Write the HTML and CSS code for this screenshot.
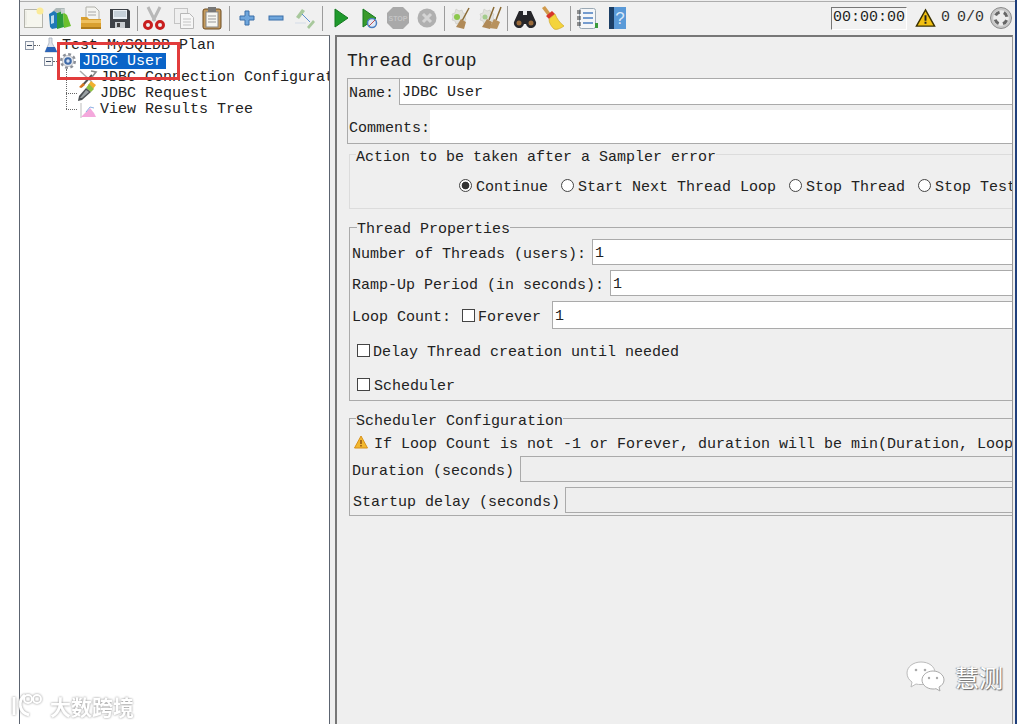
FILE: index.html
```html
<!DOCTYPE html>
<html lang="en">
<head>
<meta charset="utf-8">
<title>Thread Group</title>
<link rel="stylesheet" href="styles.css">
</head>
<body>
<div class="app">
  <div class="toolbar">
    <span class="tool g1"><svg viewBox="0 0 24 24"><rect x="3.500" y="3.500" width="18" height="18" fill="#f6f6ee" stroke="#b4b4ac"/><path d="M5 5v14" stroke="#e4e4dc"/><circle cx="19" cy="5" r="3.500" fill="#fbeb98"/></svg></span>
    <span class="tool g3"><svg viewBox="0 0 24 24"><path d="M4 6l4-4h9l-3 5z" fill="#aeb8b8"/><path d="M1 8l5-3 3 2v15l-5 1-2-2z" fill="#1f79b8"/><path d="M3 10l3-1v8l-3 1z" fill="#bcdcec"/><path d="M9 7l6-2 1 16-7 2z" fill="#2b9a3c"/><path d="M15 6l4 3 4 11-7 2z" fill="#6cc02c"/><path d="M13 3h4v4l-4 1z" fill="#c8d0d0"/></svg></span>
    <span class="tool g7"><svg viewBox="0 0 24 24"><path d="M7 1h9l4 4v10H7z" fill="#f4f4f0" stroke="#b0b0aa"/><path d="M9 6h8M9 9h8" stroke="#a8a8a8"/><path d="M2 11h6l2 2h12v8a2 2 0 0 1-2 2H4a2 2 0 0 1-2-2z" fill="#d9a030"/><path d="M2 14h20v3H2z" fill="#efc160"/><path d="M2 21h20v2H2z" fill="#b07c1c"/></svg></span>
    <span class="tool g5"><svg viewBox="0 0 24 24"><path d="M2 3h18l2 2v17H2z" fill="#3e4248"/><rect x="5" y="4" width="14" height="9" fill="#e8eef4"/><path d="M6 6h12M6 8h12M6 10h12" stroke="#a4b4c0"/><rect x="7" y="16" width="10" height="6" fill="#c8ccd0"/><rect x="9" y="17" width="3" height="4" fill="#444"/></svg></span>
    <span class="sep"></span>
    <span class="tool g4"><svg viewBox="0 0 24 24"><path d="M6 1l7 14M18 1l-7 14" stroke="#b8b8b8" stroke-width="3"/><circle cx="6" cy="19" r="3.500" fill="none" stroke="#c81e1e" stroke-width="3"/><circle cx="18" cy="19" r="3.500" fill="none" stroke="#c81e1e" stroke-width="3"/></svg></span>
    <span class="tool g6"><svg viewBox="0 0 24 24"><rect x="2.500" y="2.500" width="13" height="15" fill="#efefef" stroke="#c4c4c4"/><path d="M8.500 7.500h9l4 4v11h-13z" fill="#f6f6f6" stroke="#b8b8b8"/><path d="M11 13h8M11 16h8M11 19h8" stroke="#c4c4c4"/></svg></span>
    <span class="tool g4"><svg viewBox="0 0 24 24"><rect x="3" y="3" width="18" height="20" rx="2" fill="#c49a5c" stroke="#6b4a20"/><rect x="6" y="6" width="12" height="15" fill="#f6f6f0" stroke="#888"/><rect x="8" y="1" width="8" height="5" fill="#777"/><path d="M8 10h8M8 13h8M8 16h8" stroke="#999"/></svg></span>
    <span class="sep"></span>
    <span class="tool g5"><svg viewBox="0 0 24 24"><path d="M10 5h4v5h5v4h-5v5h-4v-5H5v-4h5z" fill="#6fa6dc" stroke="#3a6ea8"/></svg></span>
    <span class="tool g5"><svg viewBox="0 0 24 24"><rect x="5" y="10" width="14" height="4" fill="#6fa6dc" stroke="#3a6ea8"/></svg></span>
    <span class="tool g5"><svg viewBox="0 0 24 24"><path d="M3 11l6-8 3 2-6 8z" fill="#a8c89c"/><path d="M14 21l6-7 2 2-6 7z" fill="#a8c89c"/><path d="M9 8l8 8" stroke="#5a8fd0"/><path d="M2 17h11" stroke="#d4dce8"/></svg></span>
    <span class="sep"></span>
    <span class="tool g6"><svg viewBox="0 0 24 24"><path d="M6 3l13 9-13 9z" fill="#1f9a2c" stroke="#157a20"/></svg></span>
    <span class="tool g4"><svg viewBox="0 0 24 24"><path d="M6 3l13 9-13 9z" fill="#3a9a2c" stroke="#157a20"/><circle cx="15" cy="17" r="4.500" fill="#dfe9f6" stroke="#4a7ec0" stroke-width="1.500"/><path d="M12 20l6-6" stroke="#c05050"/></svg></span>
    <span class="tool g5"><svg viewBox="0 0 24 24"><path d="M7 1h10l6 6v10l-6 6H7l-6-6V7z" fill="#a9a9a9"/><text x="12" y="15" class="stop-text">STOP</text></svg></span>
    <span class="tool g5"><svg viewBox="0 0 24 24"><circle cx="12" cy="12" r="9.500" fill="#b0b0b0"/><path d="M8 8l8 8M16 8l-8 8" stroke="#d4d4d4" stroke-width="3"/></svg></span>
    <span class="sep"></span>
    <span class="tool g3"><svg viewBox="0 0 24 24"><path d="M8 3l3 2 3-1 1 3 3 1-1 3 1 3-3 1-1 3-3-1-3 1-1-3-3-1 1-3-1-3 3-1z" fill="#e2e2dc" stroke="#c8c8c2" stroke-width=".6"/><circle cx="9" cy="11" r="3" fill="#8cc84c"/><path d="M21 2l-7 13" stroke="#8a6a34" stroke-width="1.500"/><path d="M13 13l5 3-2 7-8-2z" fill="#b08a58"/></svg></span>
    <span class="tool g6"><svg viewBox="0 0 24 24"><path d="M6 3l3 2 3-1 1 3 3 1-1 3 1 3-3 1-1 3-3-1-3 1-1-3-3-1 1-3-1-3 3-1z" fill="#e2e2dc" stroke="#c8c8c2" stroke-width=".6"/><circle cx="7" cy="11" r="2.500" fill="#a4cc8c"/><path d="M16 1l-5 13M23 1l-5 13" stroke="#8a6a34" stroke-width="1.500"/><path d="M9 13l5 3-2 7-8-2z" fill="#b08a58"/><path d="M16 13l6 3-3 7-8-1z" fill="#b8925e"/></svg></span>
    <span class="sep"></span>
    <span class="tool g5"><svg viewBox="0 0 24 24"><path d="M6 5h4v4h4V5h4l5 11a5 5 0 1 1-10 2h-2a5 5 0 1 1-10-2z" fill="#26262a"/><circle cx="6" cy="17" r="2.500" fill="#9a6a3a"/><circle cx="18" cy="17" r="2.500" fill="#9a6a3a"/></svg></span>
    <span class="tool g4"><svg viewBox="0 0 24 24"><path d="M1 2l3-2 6 8-3 2z" fill="#d09a4c"/><path d="M5 10l6-5 3 3-6 5z" fill="#d8352a"/><path d="M8 13l6-5c2 5 5 9 9 12-4 3-8 4-10 3-3-3-5-6-5-10z" fill="#f4d43c" stroke="#c8a020" stroke-width=".6"/></svg></span>
    <span class="sep"></span>
    <span class="tool g4"><svg viewBox="0 0 24 24"><rect x="4.500" y="2.500" width="16" height="20" rx="2" fill="#f4f6f8" stroke="#9aa8b4"/><path d="M8 7h10M8 12h10M8 17h10" stroke="#4a7ec0" stroke-width="1.500"/><path d="M2 5h4M2 7h4M2 11h4M2 13h4M2 17h4M2 19h4" stroke="#333"/><rect x="20" y="17" width="3" height="5" fill="#3a9a3a"/></svg></span>
    <span class="tool g6"><svg viewBox="0 0 24 24"><rect x="4" y="1" width="17" height="22" fill="#5a9ad8"/><rect x="4" y="1" width="5" height="22" fill="#1c3f66"/><text x="15" y="18" class="help-text">?</text></svg></span>
    <span class="status">
      <span class="timer">00:00:00</span>
      <svg class="warn-big" viewBox="0 0 22 20"><path d="M11 1.500l9.500 17h-19z" fill="#f2c010" stroke="#3a3000" stroke-width="1.500"/><path d="M10 7h2v6h-2zM10 14h2v2h-2z" fill="#222"/></svg>
      <span class="count">0</span>
      <span class="count ratio">0/0</span>
      <svg class="round" viewBox="0 0 22 22"><circle cx="11" cy="11" r="10.500" fill="#c8c8c8" stroke="#8c8c8c"/><circle cx="11" cy="11" r="7.800" fill="#ececec"/><circle cx="11" cy="11" r="6" fill="none" stroke="#666" stroke-width="3" stroke-dasharray="5 4.420" stroke-dashoffset="-2.200"/></svg>
    </span>
  </div>
  <div class="workspace">
    <div class="tree">
      <div class="tree-row root">
        <span class="handle"></span>
        <svg class="node-icon flask" viewBox="0 0 14 16"><path d="M5 1h3v5l5 9H1l4-9z" fill="#e0e4ec" stroke="#a4aebc" stroke-width=".8"/><path d="M3 10h8l2 5H1z" fill="#2a64b8"/></svg>
        <span class="label">Test MySQLDB Plan</span>
      </div>
      <div class="tree-row user">
        <span class="handle"></span>
        <svg class="node-icon gear" viewBox="0 0 16 16"><circle cx="8" cy="8" r="6.600" fill="none" stroke="#8c9098" stroke-width="2.800" stroke-dasharray="2.800 2.380"/><circle cx="8" cy="8" r="5.600" fill="#e4e6ea" stroke="#a4a8b0" stroke-width=".6"/><circle cx="8" cy="8" r="3.800" fill="#3f6aa8"/><circle cx="8" cy="8" r="1.700" fill="#d4e0f0"/></svg>
        <span class="label selected">JDBC User</span>
      </div>
      <div class="children">
        <div class="tree-row child">
          <span class="stub"></span>
          <svg class="child-icon" viewBox="0 0 20 24"><path d="M4 22L15 10" stroke="#555" stroke-width="2"/><path d="M14 6l5 1-4 5" fill="none" stroke="#8a8a8a" stroke-width="1.600"/><path d="M3 6l12 11" stroke="#aaa" stroke-width="1.500"/><path d="M2 22l4-4 2 2-4 3z" fill="#d87820"/></svg>
          <span class="label">JDBC Connection Configuration</span>
        </div>
        <div class="tree-row child">
          <span class="stub"></span>
          <svg class="child-icon" viewBox="0 0 20 24"><path d="M14 0l5 4-3 4-5-4z" fill="#f0b030"/><path d="M12 3l5 5-3 3-5-4z" fill="#8cc040"/><path d="M9 7l5 4-9 8-4 1 1-5z" fill="#4c5054"/><path d="M9 9l3 2-7 6-2 0z" fill="#9aa0a4"/></svg>
          <span class="label">JDBC Request</span>
        </div>
        <div class="tree-row child">
          <span class="stub"></span>
          <svg class="child-icon" viewBox="0 0 20 24"><path d="M4 6v15" stroke="#bbb"/><path d="M4 20l6-6 3-3 4 5 2 4z" fill="#f4a8dc"/><path d="M9 15l4-5 4 1" fill="none" stroke="#8cb0e4"/></svg>
          <span class="label">View Results Tree</span>
        </div>
      </div>
    </div>
    <div class="main">
      <div class="content">
        <h1 class="title">Thread Group</h1>
        <div class="name-panel">
          <div class="row name-row"><label class="text" for="n">Name:</label><input id="n" class="field" value="JDBC User"></div>
          <div class="row comment-row"><label class="text" for="c">Comments:</label><input id="c" class="field bare"></div>
        </div>
        <fieldset class="group faint">
          <legend>Action to be taken after a Sampler error</legend>
          <div class="radios">
            <label class="choice"><input type="radio" name="a" checked><span>Continue</span></label>
            <label class="choice"><input type="radio" name="a"><span>Start Next Thread Loop</span></label>
            <label class="choice"><input type="radio" name="a"><span>Stop Thread</span></label>
            <label class="choice wide"><input type="radio" name="a"><span>Stop Test Now</span></label>
          </div>
        </fieldset>
        <fieldset class="group props">
          <legend>Thread Properties</legend>
          <div class="row first"><span class="text">Number of Threads (users):</span><input class="field" value="1"></div>
          <div class="row"><span class="text">Ramp-Up Period (in seconds):</span><input class="field" value="1"></div>
          <div class="row tall"><span class="text">Loop Count:</span><label class="choice forever"><input type="checkbox"><span>Forever</span></label><input class="field" value="1"></div>
          <label class="choice delay"><input type="checkbox"><span>Delay Thread creation until needed</span></label>
          <label class="choice sched"><input type="checkbox"><span>Scheduler</span></label>
        </fieldset>
        <fieldset class="group config">
          <legend>Scheduler Configuration</legend>
          <div class="warning">
            <svg class="warn-small" viewBox="0 0 14 14"><path d="M7 1l6.500 12H.5z" fill="#f2b830" stroke="#d89018"/><path d="M6.300 5h1.400v4H6.300zM6.300 10h1.400v1.500H6.300z" fill="#8a4a10"/></svg>
            <span class="warn-text">If Loop Count is not -1 or Forever, duration will be min(Duration, Loop Count * iteration duration)</span>
          </div>
          <div class="row first"><span class="text">Duration (seconds)</span><input class="field off" disabled></div>
          <div class="row startup"><span class="text">Startup delay (seconds)</span><input class="field off" disabled></div>
        </fieldset>
      </div>
    </div>
  </div>
</div>
<div class="annotation"></div>
<div class="mark-right">
  <svg class="wechat" viewBox="0 0 40 32"><path d="M15 1C7 1 1 6 1 12c0 4 2 7 5 9l-1 5 5-3c2 .5 3 .5 5 .5 8 0 14-5 14-11.500S23 1 15 1z" fill="#fff" stroke="#bbb"/><path d="M27 10c-6 0-11 4-11 9s5 9 11 9c1 0 2 0 3-.3l4 2.300-1-4c3-1.500 5-4 5-7 0-5-5-9-11-9z" fill="#fff" stroke="#aaa"/><circle cx="10" cy="9" r="1.300" fill="#aaa"/><circle cx="19" cy="9" r="1.300" fill="#aaa"/><circle cx="23" cy="17" r="1.200" fill="#aaa"/><circle cx="31" cy="17" r="1.200" fill="#aaa"/></svg>
  <span class="mark-text">慧测</span>
</div>
<div class="mark-left">
  <svg class="logo" viewBox="0 0 36 28"><path d="M3 5v18M14 3C7 8 7 20 18 23" fill="none" stroke="#fff" stroke-width="3"/><circle cx="17" cy="7" r="4" fill="none" stroke="#fff" stroke-width="2"/><circle cx="26" cy="7" r="4" fill="none" stroke="#fff" stroke-width="2"/></svg>
  <span class="mark-cn">大数跨境</span>
</div>
</body>
</html>
```
FILE: styles.css
```css
* { box-sizing: border-box; }
html, body { margin: 0; height: 100%; }
body {
  position: relative;
  width: 1036px;
  height: 724px;
  overflow: hidden;
  background: #fff;
  font: 15px/16px "Liberation Mono", monospace;
  color: #222;
}
.app {
  display: flex;
  flex-direction: column;
  width: 998px;
  height: 724px;
  margin-left: 19px;
  border-left: 1px solid #5c6470;
  border-right: 2px solid #1f3f7c;
  background: #efefef;
}
.toolbar {
  display: flex;
  align-items: center;
  flex: none;
  height: 34px;
  margin-top: 1px;
  padding-bottom: 1px;
  border-top: 1px solid #adadad;
  background: #f0f0f0;
}
.tool { flex: none; width: 24px; height: 24px; }
.tool svg { display: block; width: 24px; height: 24px; }
.g1 { margin-left: 1px; }
.g3 { margin-left: 3px; }
.g4 { margin-left: 4px; }
.g5 { margin-left: 5px; }
.g6 { margin-left: 6px; }
.g7 { margin-left: 7px; }
.sep {
  flex: none;
  width: 1px;
  height: 25px;
  margin-left: 5px;
  background: #9c9c9c;
}
.stop-text {
  font: bold 7px "Liberation Sans", sans-serif;
  fill: #c4c4c4;
  text-anchor: middle;
}
.help-text {
  font: 17px "Liberation Sans", sans-serif;
  fill: #d8e8f8;
  text-anchor: middle;
}
.status {
  display: flex;
  align-items: center;
  margin-left: auto;
  padding-right: 3px;
}
.timer {
  display: block;
  width: 76px;
  height: 23px;
  padding: 2px 0 0 1px;
  border: 1px solid;
  border-color: #777 #fff #fff #777;
  font-size: 15px;
  background: #f2f2f2;
}
.warn-big { width: 21px; height: 20px; margin-left: 8px; }
.count { margin-left: 5px; color: #333; }
.ratio { margin-left: 7px; }
.round { width: 22px; height: 22px; margin-left: 6px; }
.workspace { display: flex; flex: 1; min-height: 0; }
.tree {
  flex: none;
  width: 310px;
  padding-top: 1px;
  overflow: hidden;
  border-top: 1px solid #8a8a8a;
  border-right: 1px solid #5c6470;
  background: #fff;
}
.tree-row {
  display: flex;
  align-items: center;
  height: 16px;
  white-space: nowrap;
}
.label { height: 16px; line-height: 18px; }
.root { padding-left: 5px; }
.user { padding-left: 24px; }
.handle {
  position: relative;
  flex: none;
  width: 9px;
  height: 9px;
  border: 1px solid #8a94a4;
  background: #f6f6f6;
}
.handle::before {
  content: "";
  position: absolute;
  left: 1px;
  top: 3px;
  width: 5px;
  height: 1px;
  background: #3a4a64;
}
.handle::after {
  content: "";
  position: absolute;
  left: 8px;
  top: 3px;
  width: 6px;
  border-top: 1px dotted #666;
}
.node-icon { flex: none; width: 16px; height: 16px; }
.flask { margin-left: 9px; margin-right: 3px; }
.gear { margin-left: 7px; margin-right: 4px; }
.selected {
  padding: 0 3px 0 2px;
  background: #0a64c8;
  color: #fff;
}
.children { position: relative; padding-left: 46px; }
.children::before {
  content: "";
  position: absolute;
  left: 46px;
  top: 0;
  height: 40px;
  border-left: 1px dotted #666;
}
.stub {
  flex: none;
  width: 11px;
  border-top: 1px dotted #666;
}
.child-icon {
  flex: none;
  width: 20px;
  height: 24px;
  margin: -4px 3px -4px 0;
  overflow: visible;
}
.main {
  flex: none;
  width: 678px;
  margin-left: 5px;
  overflow: hidden;
  border-top: 2px solid #777;
  border-left: 2px solid #777;
  border-right: 1px solid #999;
}
.content { width: 770px; padding-left: 10px; }
.title {
  margin: 0 0 6px;
  padding-top: 14px;
  font: normal 18px/21px "Liberation Mono", monospace;
}
.name-panel {
  height: 66px;
  padding-left: 1px;
  border: 1px solid #aaa;
  border-right: 0;
}
.row { display: flex; align-items: center; white-space: nowrap; }
.text { flex: none; padding-top: 6px; }
.field {
  flex: 1;
  min-width: 0;
  height: 26px;
  margin: 0 0 0 6px;
  padding: 2px 2px 0;
  border: 1px solid #aaa;
  border-radius: 0;
  outline: 0;
  background: #fff;
  font: 15px "Liberation Mono", monospace;
  color: #222;
}
.name-row { height: 26px; margin-top: -1px; }
.name-row .field { height: 27px; margin-left: 5px; padding-top: 3px; }
.comment-row { height: 33px; margin-top: 6px; }
.comment-row .text { padding-top: 4px; }
.comment-row .field { height: 33px; margin-left: 0; border: 0; }
.group {
  min-width: 0;
  margin: 0 0 0 2px;
  padding: 0;
  border: 1px solid #aaa;
  border-right: 0;
}
.group legend {
  height: 16px;
  margin-left: 6px;
  padding: 0;
  line-height: 22px;
}
.faint { margin-top: 2px; padding-bottom: 15px; border-color: #dcdcdc; }
.faint legend, .config legend { line-height: 24px; }
.radios { display: flex; margin-top: 15px; padding-left: 109px; white-space: nowrap; }
.choice { display: flex; flex: none; align-items: center; height: 16px; }
.choice span { padding-top: 6px; }
.radios .choice { margin-right: 13px; }
.choice input {
  flex: none;
  width: 13px;
  height: 13px;
  margin: 1px 4px 0 0;
  border: 1px solid #444;
  background: #fff;
  appearance: none;
}
.choice input[type="radio"] { border-radius: 50%; }
.choice input[type="radio"]:checked {
  background: radial-gradient(circle, #333 0 3.500px, #fff 4.200px);
}
.choice input[type="checkbox"] { margin-right: 3px; }
.props { margin-top: 10px; padding: 0 0 8px 2px; }
.props legend { margin-left: 5px; }
.props .row { height: 26px; margin-top: 5px; }
.props .row.first { margin-top: 4px; }
.props .row.tall { height: 28px; }
.forever { margin-left: 11px; }
.tall .field { height: 28px; margin-left: 11px; }
.delay { margin: 13px 0 0 5px; }
.sched { margin: 18px 0 0 5px; }
.sched input[type="checkbox"] { margin-right: 4px; }
.config { margin-top: 9px; padding: 0 0 2px 2px; }
.config legend { margin-left: 4px; }
.warning {
  display: flex;
  align-items: center;
  height: 16px;
  margin: 8px 0 0 2px;
  white-space: nowrap;
}
.warn-text { padding-top: 6px; }
.warn-small { flex: none; width: 14px; height: 14px; margin-right: 6px; }
.config .row { height: 26px; margin-top: 6px; }
.config .row.startup { margin-top: 5px; padding-left: 1px; }
.startup .field { margin-left: 5px; }
.off { background: #eee; }
.annotation {
  position: absolute;
  left: 57px;
  top: 42px;
  width: 123px;
  height: 38px;
  border: 3px solid #e23c3c;
}
.mark-right {
  position: absolute;
  left: 906px;
  top: 661px;
  display: flex;
  align-items: center;
}
.wechat { width: 40px; height: 32px; }
.mark-text {
  margin-left: 9px;
  font: 24px/28px "Noto Sans CJK SC", sans-serif;
  color: #fff;
  text-shadow: 1px 1px 1px #666, -1px 0 1px #999;
}
.mark-left {
  position: absolute;
  left: 11px;
  top: 692px;
  display: flex;
  align-items: center;
  opacity: .95;
  filter: drop-shadow(0 0 1px #888);
}
.logo { width: 36px; height: 28px; }
.mark-cn {
  margin-left: 3px;
  font: bold 21px/28px "Noto Sans CJK SC", sans-serif;
  color: #fff;
}
```
